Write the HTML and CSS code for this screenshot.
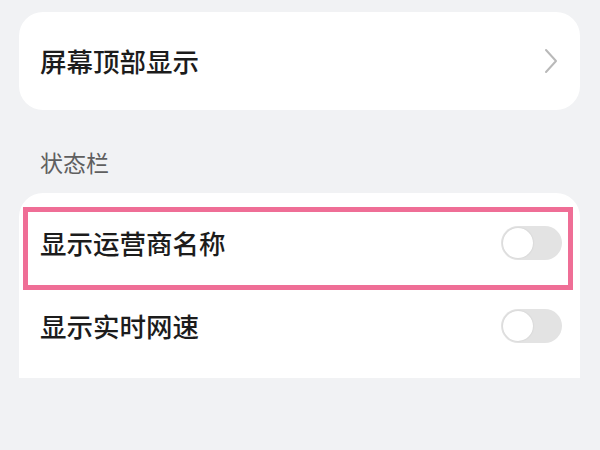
FILE: index.html
```html
<!DOCTYPE html>
<html lang="zh-CN">
<head>
    <meta charset="UTF-8">
    <meta name="viewport" content="width=device-width, initial-scale=1.0">
    <title>状态栏设置</title>
    <link rel="stylesheet" href="styles.css">
</head>
<body>

    <main class="settings">
        <section class="card card-top">
            <div class="row">
                <span class="row-title">屏幕顶部显示</span>
                <svg class="chevron" width="14" height="26" viewBox="0 0 14 26">
                    <path d="M2 2 L12 13 L2 24" fill="none" stroke="#b9b9b9" stroke-width="2" stroke-linecap="round" stroke-linejoin="round"/>
                </svg>
            </div>
        </section>

        <h2 class="section-label">状态栏</h2>

        <section class="card card-list">
            <div class="row">
                <span class="row-title">显示运营商名称</span>
                <span class="switch"><span class="knob"></span></span>
            </div>
            <div class="row">
                <span class="row-title">显示实时网速</span>
                <span class="switch"><span class="knob"></span></span>
            </div>
            <!-- annotation box around the first row -->
            <div class="highlight"></div>
        </section>
    </main>

</body>
</html>
```

FILE: styles.css
```css
body {
    margin: 0;
    padding: 0;
    background-color: #f1f2f4;
    font-family: "Noto Sans CJK SC", "Noto Sans", sans-serif;
    color: #1c1c1c;
}
.settings {
    padding: 12px 20px 0 19px;
}
.card {
    background-color: #fff;
}
.card-top {
    height: 98px;
    border-radius: 24px;
    display: flex;
    align-items: center;
}
.card-top .row {
    flex: 1;
    padding: 0 22px 0 21px;
}
.row {
    display: flex;
    align-items: center;
    justify-content: space-between;
}
.row-title {
    font-size: 26.5px;
    line-height: 32px;
    font-weight: 500;
}
.chevron {
    display: block;
}
.section-label {
    margin: 37px 0 16px 21px;
    font-size: 23px;
    line-height: 30px;
    font-weight: normal;
    color: #5f5f5f;
}
.card-list {
    position: relative;
    border-radius: 24px 24px 0 0;
    padding: 8px 0 11px;
}
.card-list .row {
    height: 83px;
    padding: 0 18px 0 21px;
}
.switch {
    width: 61px;
    height: 34px;
    border-radius: 17px;
    background-color: #e3e3e3;
    display: flex;
    align-items: center;
    padding: 0 2px;
    box-sizing: border-box;
}
.knob {
    width: 30px;
    height: 30px;
    border-radius: 50%;
    background-color: #fff;
    box-shadow: 0 0 2px rgba(0, 0, 0, 0.12);
}
.highlight {
    position: absolute;
    top: 14px;
    left: 4px;
    width: 550px;
    height: 83px;
    border: 5px solid #ef6e96;
    box-sizing: border-box;
}
```
